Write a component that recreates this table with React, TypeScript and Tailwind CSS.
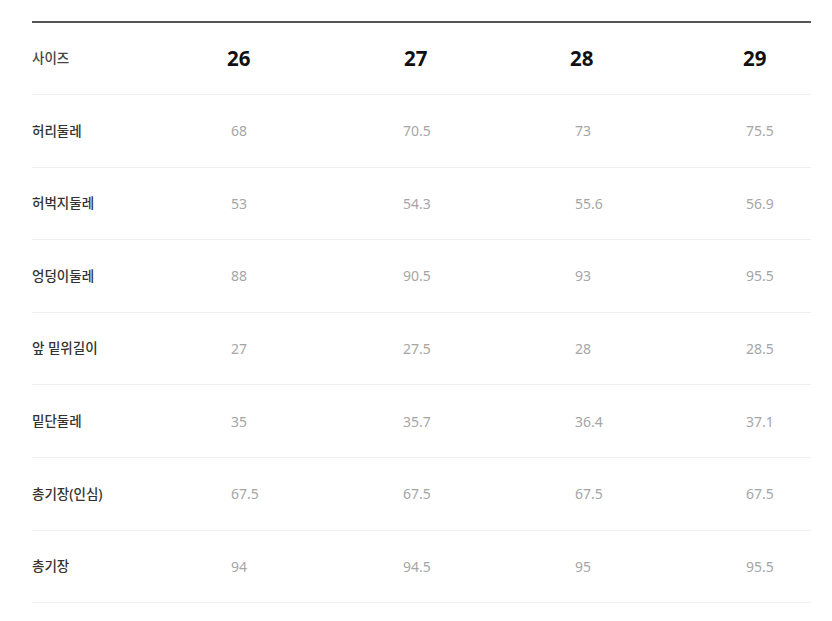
import React from 'react';

// Size chart data (cm)
const SIZES = ['26', '27', '28', '29'];

const ROWS: { label: string; values: string[] }[] = [
  { label: '허리둘레', values: ['68', '70.5', '73', '75.5'] },
  { label: '허벅지둘레', values: ['53', '54.3', '55.6', '56.9'] },
  { label: '엉덩이둘레', values: ['88', '90.5', '93', '95.5'] },
  { label: '앞 밑위길이', values: ['27', '27.5', '28', '28.5'] },
  { label: '밑단둘레', values: ['35', '35.7', '36.4', '37.1'] },
  { label: '총기장(인심)', values: ['67.5', '67.5', '67.5', '67.5'] },
  { label: '총기장', values: ['94', '94.5', '95', '95.5'] },
];

// column widths, written out so tailwind picks them up
const COL_WIDTHS = ['w-[172px]', 'w-[172px]', 'w-[171px]', 'flex-1'];
// header numerals sit slightly off the value column edge
const HEAD_SHIFT = ['-ml-[4px]', 'ml-[1px]', '-ml-[5px]', '-ml-[3px]'];

const font = { fontFamily: '"Noto Sans", "Noto Sans CJK KR", sans-serif' };

export default function App() {
  return (
    <div className="w-[832px] h-[621px] bg-white pt-[21px] px-[32px] pr-[21px]" style={font}>
      <div className="border-t-2 border-[#555555]">
        {/* header row */}
        <div className="flex items-center h-[72px] border-b border-[#efefef]">
          <div className="w-[199px] text-[13.5px] text-[#444] font-medium">사이즈</div>
          {SIZES.map((s, i) => (
            <div key={s} className={COL_WIDTHS[i]}>
              <span className={`inline-block text-[20.5px] font-bold text-[#111] ${HEAD_SHIFT[i]}`}>{s}</span>
            </div>
          ))}
        </div>

        {ROWS.map(row => (
          <div key={row.label} className="flex items-center h-[72.6px] border-b border-[#efefef]">
            <div className="w-[199px] text-[13.5px] text-[#333] font-medium">{row.label}</div>
            {row.values.map((v, i) => (
              <div key={i} className={`${COL_WIDTHS[i]} text-[14px] text-[#a6a6a6]`}>{v}</div>
            ))}
          </div>
        ))}
      </div>
    </div>
  );
}
